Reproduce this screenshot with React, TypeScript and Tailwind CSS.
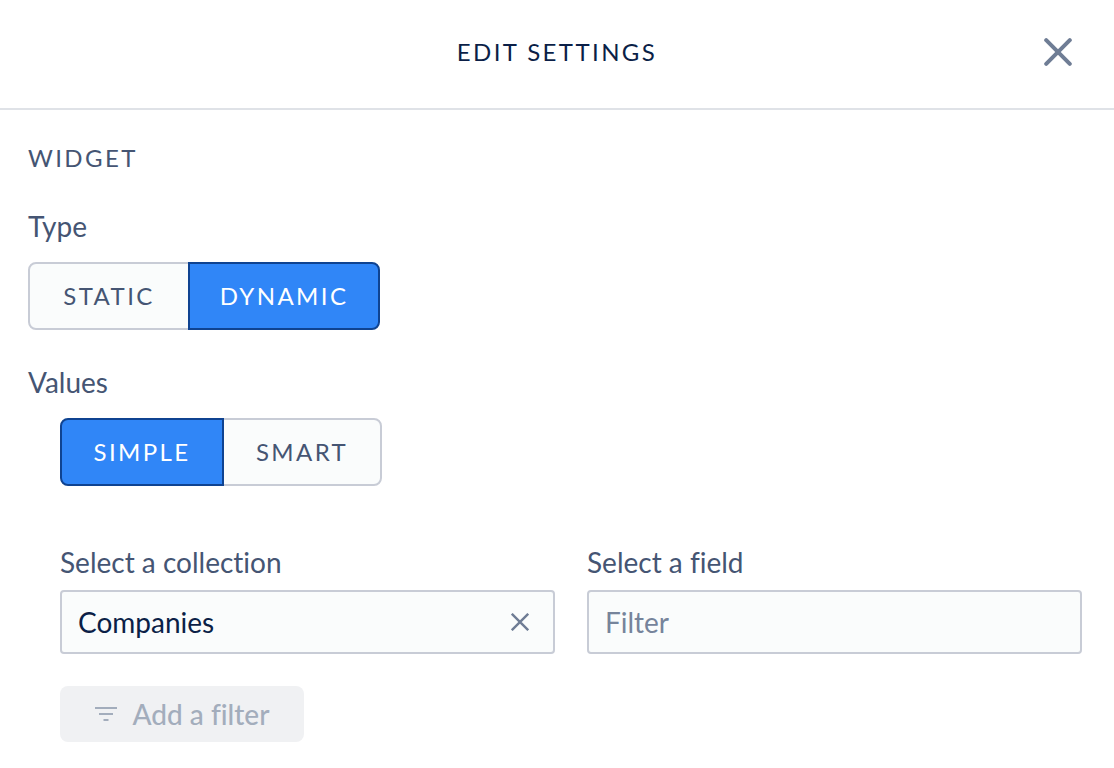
import { useState } from "react";

function CloseIcon() {
  return (
    <svg className="size-7" viewBox="0 0 28 28" fill="none" stroke="currentColor" strokeWidth="4" strokeLinecap="round" aria-hidden="true">
      <path d="M2.200 2.200 25.800 25.800M25.800 2.200 2.200 25.800" />
    </svg>
  );
}

function ClearIcon() {
  return (
    <svg className="size-[18px]" viewBox="0 0 18 18" fill="none" stroke="currentColor" strokeWidth="2.400" aria-hidden="true">
      <path d="M.8.8 17.200 17.200M17.200.8.8 17.200" />
    </svg>
  );
}

function FilterIcon() {
  return (
    <svg className="h-4 w-[22px]" viewBox="0 0 22 16" fill="currentColor" aria-hidden="true">
      <path d="M0 1h22v2H0zM4 7h14v2H4zM8.500 13h5v2h-5z" />
    </svg>
  );
}

const segment = "h-[68px] border-2 px-4 text-2xl leading-8 tracking-widest uppercase";
const active = "relative z-10 border-[#0f4391] bg-[#3086f7] text-white";
const idle = "border-[#c8ccd6] bg-[#fafcfc] text-[#455573]";

type SegmentedProps = {
  label: string;
  options: { name: string; width: string }[];
  initial: string;
};

function Segmented({ label, options, initial }: SegmentedProps) {
  const [selected, setSelected] = useState(initial);
  return (
    <div role="group" aria-label={label} className="mt-5 flex">
      {options.map((option, index) => (
        <button
          key={option.name}
          type="button"
          aria-pressed={selected === option.name}
          onClick={() => setSelected(option.name)}
          className={`${segment} ${option.width} ${index === 0 ? "rounded-l-lg" : "-ml-0.5 rounded-r-lg"} ${
            selected === option.name ? active : idle
          }`}
        >
          {option.name}
        </button>
      ))}
    </div>
  );
}

export default function App() {
  const [collection, setCollection] = useState("Companies");
  return (
    <div className="min-h-screen bg-white font-['Lato',sans-serif] text-[28px] leading-8 text-[#455573] antialiased [font-variant-ligatures:none]">
      <header className="grid grid-cols-[1fr_auto_1fr] items-center border-b-2 border-[#dfe2e7] px-[42px] pt-9 pb-10">
        <h1 className="col-start-2 text-2xl tracking-widest text-[#0b1f47] uppercase">Edit settings</h1>
        <button type="button" aria-label="Close" className="justify-self-end text-[#6f7d95]">
          <CloseIcon />
        </button>
      </header>
      <main className="px-7 pt-8 pb-6">
        <h2 className="text-2xl tracking-widest uppercase">Widget</h2>
        <h3 className="mt-9">Type</h3>
        <Segmented
          label="Type"
          initial="Dynamic"
          options={[
            { name: "Static", width: "w-[162px]" },
            { name: "Dynamic", width: "w-48" },
          ]}
        />
        <h3 className="mt-9">Values</h3>
        <div className="pr-1 pl-8">
          <Segmented
            label="Values"
            initial="Simple"
            options={[
              { name: "Simple", width: "w-[164px]" },
              { name: "Smart", width: "w-40" },
            ]}
          />
          <div className="mt-15 grid grid-cols-2 gap-8">
            <div>
              <label htmlFor="collection" className="block">
                Select a collection
              </label>
              <div className="mt-3 flex h-16 items-center rounded-sm border-2 border-[#c8ccd6] bg-[#fafcfc] pr-6 pl-4">
                <input
                  id="collection"
                  type="text"
                  value={collection}
                  onChange={(event) => setCollection(event.target.value)}
                  className="min-w-0 flex-1 bg-transparent text-[#0b1f47] outline-none"
                />
                <button type="button" aria-label="Clear collection" onClick={() => setCollection("")} className="text-[#6f7d95]">
                  <ClearIcon />
                </button>
              </div>
            </div>
            <div>
              <label htmlFor="field" className="block">
                Select a field
              </label>
              <input
                id="field"
                type="text"
                placeholder="Filter"
                className="mt-3 block h-16 w-full rounded-sm border-2 border-[#c8ccd6] bg-[#fafcfc] px-4 outline-none placeholder:text-[#76849b]"
              />
            </div>
          </div>
          <button
            type="button"
            disabled
            className="mt-8 flex h-14 w-[244px] items-center justify-center gap-4 rounded-lg bg-[#f0f1f3] font-medium text-[#a3adbc]"
          >
            <FilterIcon />
            Add a filter
          </button>
        </div>
      </main>
    </div>
  );
}
